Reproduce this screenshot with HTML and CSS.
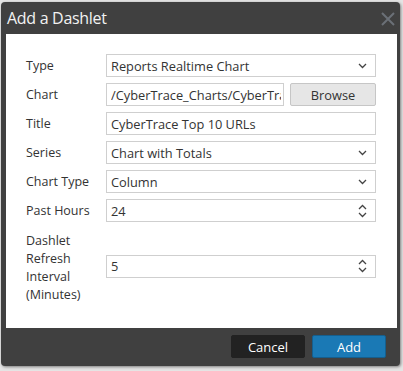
FILE: index.html
```html
<!DOCTYPE html>
<html lang="en">
<head>
    <meta charset="UTF-8">
    <title>Add a Dashlet</title>
    <link rel="stylesheet" href="styles.css">
</head>
<body>
  <div class="dialog">
    <div class="dialog-header">
      <h1>Add a Dashlet</h1>
      <span class="close">
        <svg width="14" height="14" viewBox="0 0 14 14"><path d="M1 1 L13 13 M13 1 L1 13" stroke="#6b7077" stroke-width="2"/></svg>
      </span>
    </div>

    <div class="dialog-body">
      <div class="form">
        <label>Type</label>
        <div class="field select">
          <span>Reports Realtime Chart</span>
          <svg class="chev" width="9" height="6" viewBox="0 0 9 6"><path d="M1 1 L4.5 4.5 L8 1" fill="none" stroke="#444" stroke-width="1.3"/></svg>
        </div>

        <label>Chart</label>
        <div class="field-row">
          <div class="field clip"><span>/CyberTrace_Charts/CyberTrace Top 10 URLs</span></div>
          <button class="browse">Browse</button>
        </div>

        <label>Title</label>
        <div class="field"><span>CyberTrace Top 10 URLs</span></div>

        <label>Series</label>
        <div class="field select">
          <span>Chart with Totals</span>
          <svg class="chev" width="9" height="6" viewBox="0 0 9 6"><path d="M1 1 L4.5 4.5 L8 1" fill="none" stroke="#444" stroke-width="1.3"/></svg>
        </div>

        <label>Chart Type</label>
        <div class="field select">
          <span>Column</span>
          <svg class="chev" width="9" height="6" viewBox="0 0 9 6"><path d="M1 1 L4.5 4.5 L8 1" fill="none" stroke="#444" stroke-width="1.3"/></svg>
        </div>

        <label>Past Hours</label>
        <div class="field select">
          <span>24</span>
          <svg class="spin" width="9" height="14" viewBox="0 0 9 14"><path d="M1 5 L4.5 1.5 L8 5 M1 9 L4.5 12.5 L8 9" fill="none" stroke="#444" stroke-width="1.3"/></svg>
        </div>

        <label class="multi">Dashlet Refresh Interval (Minutes)</label>
        <div class="field select">
          <span>5</span>
          <svg class="spin" width="9" height="14" viewBox="0 0 9 14"><path d="M1 5 L4.5 1.5 L8 5 M1 9 L4.5 12.5 L8 9" fill="none" stroke="#444" stroke-width="1.3"/></svg>
        </div>
      </div>
    </div>

    <div class="dialog-footer">
      <button class="btn btn-cancel">Cancel</button>
      <button class="btn btn-add">Add</button>
    </div>
  </div>
</body>
</html>
```

FILE: styles.css
```css
* {
    margin: 0;
    padding: 0;
    box-sizing: border-box;
}

body {
    font-family: 'Open Sans', 'Noto Sans', sans-serif;
    background: #e4e4e4;
    width: 403px;
    height: 371px;
    padding: 2px 3px 5px 1px;
}

.dialog {
    background: #404040;
    border-radius: 4px;
    box-shadow: 1px 1px 3px rgba(0, 0, 0, 0.45);
    height: 364px;
    display: flex;
    flex-direction: column;
    padding: 0 3px 0 5px;
}

.dialog-header {
    height: 32px;
    display: flex;
    align-items: center;
    justify-content: space-between;
}

.dialog-header h1 {
    color: #f2f2f2;
    font-weight: 400;
    font-size: 16px;
    margin-left: 1px;
    letter-spacing: -0.3px;
}

.close {
    display: flex;
    margin-right: 2px;
    margin-top: 1px;
}

.dialog-body {
    background: white;
    height: 294px;
    padding: 20px 21px 0 20px;
}

.form {
    display: grid;
    grid-template-columns: 80px minmax(0, 1fr);
    row-gap: 6px;
    align-items: center;
}

.form label {
    color: #333;
    font-size: 12.5px;
}

.form label.multi {
    line-height: 18px;
    padding-top: 4px;
}

.field {
    height: 23px;
    border: 1px solid #cfcfcf;
    display: flex;
    align-items: center;
    justify-content: space-between;
    padding: 0 8px 0 4px;
    font-size: 12.8px;
    color: #333;
    overflow: hidden;
    white-space: nowrap;
    min-width: 0;
}

.field.clip {
    flex: 1;
    justify-content: flex-start;
    padding-right: 2px;
}

.field.clip span {
    display: block;
    overflow: hidden;
    min-width: 0;
}

.field-row {
    display: flex;
    gap: 6px;
    min-width: 0;
}

.browse {
    flex: none;
    width: 86px;
    height: 23px;
    border: 1px solid #c6c6c6;
    background: #e6e6e6;
    font-family: inherit;
    font-size: 12.8px;
    color: #333;
    border-radius: 2px;
}

.dialog-footer {
    flex: 1;
    display: flex;
    justify-content: flex-end;
    align-items: flex-start;
    gap: 7px;
    padding: 7px 11px 0 0;
}

.btn {
    width: 74px;
    height: 23px;
    border: 1px solid transparent;
    font-family: inherit;
    font-size: 13px;
    color: white;
    border-radius: 2px;
}

.btn-cancel {
    background: #222;
    border-color: #222;
}

.btn-add {
    background: #1a79b5;
    border-color: #155f8e;
}
```
